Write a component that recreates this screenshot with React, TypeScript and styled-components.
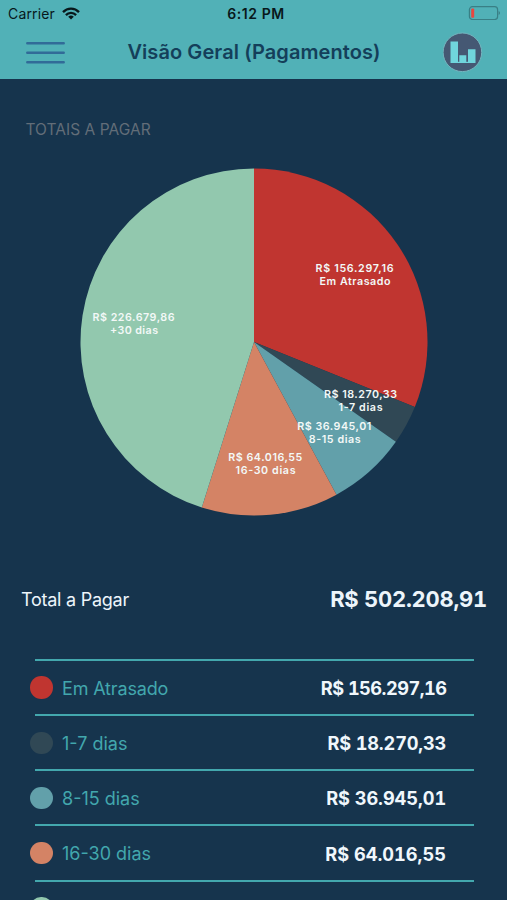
import React from "react";
import styled, { createGlobalStyle } from "styled-components";

const GlobalStyle = createGlobalStyle`
  * { box-sizing: border-box; }
  html, body { margin: 0; background: #16344d; }
  body { font-family: Inter, "Liberation Sans", sans-serif; overflow: hidden; }
`;

const Screen = styled.main`
  width: 507px;
  height: 900px;
  overflow: hidden;
  display: flex;
  flex-direction: column;
  background: #16344d;
`;

const Header = styled.header`
  flex: none;
  height: 79px;
  background: #51b1b7;
`;

const StatusBar = styled.div`
  height: 26px;
  padding: 0 7px 0 8px;
  display: grid;
  grid-template-columns: 1fr auto 1fr;
  align-items: center;
  color: #08181b;
`;

const Carrier = styled.span`
  display: flex;
  align-items: center;
  gap: 7px;
  font-size: 14px;
  letter-spacing: 0.15px;
`;

const Clock = styled.time`
  padding-left: 4px;
  font-size: 14px;
  font-weight: 600;
  letter-spacing: 0.55px;
`;

const BatteryIcon = styled.svg`
  justify-self: end;
  display: block;
`;

const NavBar = styled.nav`
  height: 52px;
  padding: 0 24px 0 26px;
  display: flex;
  align-items: center;
  justify-content: space-between;
`;

const IconButton = styled.button`
  display: block;
  padding: 0;
  border: 0;
  background: none;
  line-height: 0;
`;

const Title = styled.h1`
  margin: 0;
  font-size: 20px;
  font-weight: 600;
  line-height: 26px;
  letter-spacing: 0.08px;
  color: #143f5a;
  white-space: nowrap;
`;

const SectionTitle = styled.h2`
  flex: none;
  margin: 39px 0 0 25.5px;
  padding-top: 1px;
  font-size: 15.5px;
  font-weight: 400;
  line-height: 22px;
  letter-spacing: 0.04px;
  color: #626d78;
`;

const PieChart = styled.svg`
  flex: none;
  display: block;
  width: 348px;
  height: 348px;
  margin: 27px 0 0 80px;
`;

const SliceLabel = styled.text`
  font-size: 10.7px;
  font-weight: 600;
  fill: #f3f8f7;
  text-anchor: middle;
`;

const Total = styled.div`
  flex: none;
  height: 40px;
  margin: 63px 20px 0 21px;
  display: flex;
  align-items: center;
  justify-content: space-between;
  color: #edf5fb;
`;

const TotalLabel = styled.span`
  font-size: 18px;
  letter-spacing: -0.25px;
`;

const TotalValue = styled.strong`
  font-size: 22px;
  font-weight: 650;
  font-variant-numeric: tabular-nums;
  letter-spacing: -0.27px;
`;

const Breakdown = styled.ul`
  flex: none;
  list-style: none;
  margin: 40.2px 33px 0 35px;
  padding: 0;
`;

const Row = styled.li`
  height: 55.1px;
  padding: 0 28px 0 0;
  border-top: 2px solid #43a8ae;
  display: flex;
  align-items: center;
`;

const Dot = styled.span<{ $color: string }>`
  width: 22.5px;
  height: 22.5px;
  margin: 0 9.5px 0 -5px;
  border-radius: 50%;
  background: ${(p) => p.$color};
`;

const RowLabel = styled.span<{ $tracking?: number }>`
  flex: 1;
  padding-top: 1px;
  font-size: 18px;
  letter-spacing: ${(p) => p.$tracking ?? 0}px;
  color: #42a7ad;
`;

const RowValue = styled.span<{ $tracking?: number }>`
  padding-top: 1px;
  font-size: 18.2px;
  font-weight: 650;
  font-variant-numeric: tabular-nums;
  letter-spacing: ${(p) => p.$tracking ?? 0}px;
  margin-right: ${(p) => p.$tracking ?? 0}px;
  color: #f0f7fc;
`;

type Slice = {
  name: string;
  value: number;
  text: string;
  color: string;
  nameTracking?: number;
  valueTracking?: number;
  label: { x: number; y: number; width: number; nameX: number; nameWidth: number };
};

const slices: Slice[] = [
  { name: "Em Atrasado", value: 156297.16, text: "R$ 156.297,16", color: "#c03530", nameTracking: -0.15, valueTracking: -0.52, label: { x: 274.5, y: 103.5, width: 78, nameX: 275, nameWidth: 71 } },
  { name: "1-7 dias", value: 18270.33, text: "R$ 18.270,33", color: "#304855", valueTracking: -0.18, label: { x: 280.5, y: 229.5, width: 73, nameX: 280.5, nameWidth: 44 } },
  { name: "8-15 dias", value: 36945.01, text: "R$ 36.945,01", color: "#62a0aa", valueTracking: -0.08, label: { x: 254.3, y: 262, width: 74, nameX: 254.7, nameWidth: 52 } },
  { name: "16-30 dias", value: 64016.55, text: "R$ 64.016,55", color: "#d48365", label: { x: 185.3, y: 292.5, width: 74, nameX: 185.5, nameWidth: 60 } },
  { name: "+30 dias", value: 226679.86, text: "R$ 226.679,86", color: "#92c8ae", label: { x: 53.5, y: 153, width: 82, nameX: 54, nameWidth: 48 } },
];

const listed = slices.slice(0, 4);
const next = slices[4];

const sum = slices.reduce((acc, s) => acc + s.value, 0);
const RADIUS = 173.5;
const CENTER = 174;

function point(fraction: number) {
  const a = fraction * Math.PI * 2;
  return `${CENTER + RADIUS * Math.sin(a)} ${CENTER - RADIUS * Math.cos(a)}`;
}

function Pie() {
  let start = 0;
  const wedges = slices.map((s) => {
    const from = start / sum;
    start += s.value;
    const to = start / sum;
    const large = to - from > 0.5 ? 1 : 0;
    return (
      <path
        key={s.name}
        fill={s.color}
        d={`M${CENTER} ${CENTER}L${point(from)}A${RADIUS} ${RADIUS} 0 ${large} 1 ${point(to)}Z`}
      />
    );
  });
  return (
    <PieChart viewBox="0 0 348 348" role="img">
      {wedges}
      {slices.map(({ name, text, label }) => (
        <g key={name}>
          <SliceLabel x={label.x} y={label.y} textLength={label.width}>{text}</SliceLabel>
          <SliceLabel x={label.nameX} y={label.y + 13} textLength={label.nameWidth}>{name}</SliceLabel>
        </g>
      ))}
    </PieChart>
  );
}

export default function App() {
  return (
    <Screen>
      <GlobalStyle />
      <Header>
        <StatusBar>
          <Carrier>
            Carrier
            <svg width="18" height="13" viewBox="0 0 18 13" fill="none" stroke="#08181b" strokeWidth="2.3">
              <path d="M1 5.1C5.4 .5 12.6 .5 17 5.1" />
              <path d="M3.9 8.1C6.7 5.2 11.3 5.2 14.1 8.1" />
              <path d="M9 12.5L6.2 9.7Q9 7.4 11.8 9.7Z" fill="#08181b" stroke="none" />
            </svg>
          </Carrier>
          <Clock>6:12 PM</Clock>
          <BatteryIcon width="32" height="14" viewBox="0 0 32 14">
            <rect x="1.4" y="0.7" width="28.2" height="12.8" rx="3" fill="none" stroke="#397f85" strokeWidth="1.2" />
            <rect x="3.2" y="2.5" width="3" height="9.2" rx="1" fill="#e8473f" />
            <path d="M30.6 5v4q1.4-.5 1.4-2t-1.4-2Z" fill="#397f85" />
          </BatteryIcon>
        </StatusBar>
        <NavBar>
          <IconButton>
            <svg width="39" height="23" viewBox="0 0 39 23" stroke="#316b98" strokeWidth="2.5" strokeLinecap="round">
              <path d="M1.3 2.2H37.7M1.3 11.7H37.7M1.3 21.2H37.7" />
            </svg>
          </IconButton>
          <Title>Visão Geral (Pagamentos)</Title>
          <IconButton>
            <svg width="40" height="40" viewBox="0 0 40 40">
              <circle cx="19.4" cy="20.3" r="19.3" fill="#455873" stroke="#74b5bf" strokeWidth="1" />
              <path d="M7.5 9.5H15V31H7.5ZM16.3 23.3H23.3V31H16.3ZM25 17.3H32.500V31H25Z" fill="#70d5dc" />
              <path d="M14.5 29.8H26V31H14.5Z" fill="#70d5dc" />
            </svg>
          </IconButton>
        </NavBar>
      </Header>
      <SectionTitle>TOTAIS A PAGAR</SectionTitle>
      <Pie />
      <Total>
        <TotalLabel>Total a Pagar</TotalLabel>
        <TotalValue>R$ 502.208,91</TotalValue>
      </Total>
      <Breakdown>
        {listed.map((s) => (
          <Row key={s.name}>
            <Dot $color={s.color} />
            <RowLabel $tracking={s.nameTracking}>{s.name}</RowLabel>
            <RowValue $tracking={s.valueTracking}>{s.text}</RowValue>
          </Row>
        ))}
        <Row>
          <Dot $color={next.color} />
        </Row>
      </Breakdown>
    </Screen>
  );
}
